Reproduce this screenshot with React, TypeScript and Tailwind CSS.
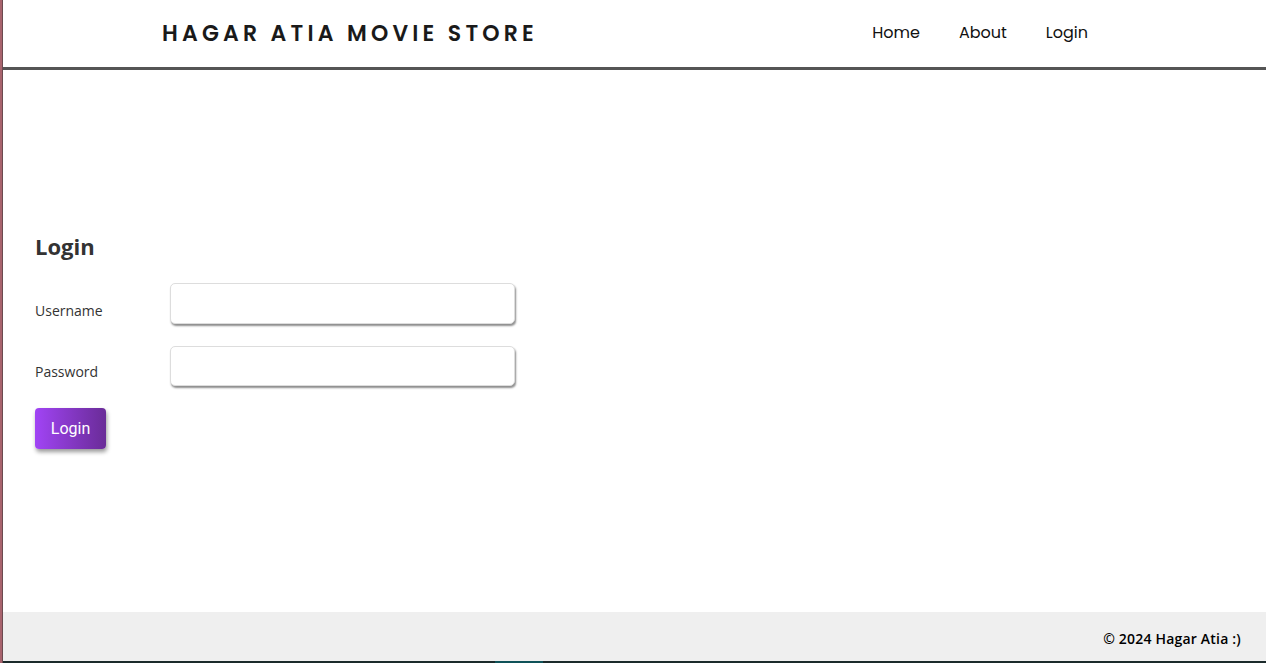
export default function App() {
  return (
    <div className="flex h-[663px] w-full bg-white font-['Open_Sans',sans-serif]">
      <div className="flex w-[3px] shrink-0">
        <div className="w-[2px] bg-[#a8636d]" />
        <div className="w-[1px] bg-[#6b4a50]" />
      </div>
      <div className="flex min-w-0 flex-1 flex-col">
        <header className="flex h-[70px] shrink-0 items-center border-b-[3px] border-[#555555] pb-[1px] pl-[159px] pr-[178px]">
          <h1 className="font-['Poppins','Inter',sans-serif] text-[22px] font-semibold tracking-[0.19em] text-[#1a1a1a]">
            HAGAR ATIA MOVIE STORE
          </h1>
          <nav className="ml-auto flex gap-[39px] font-['Poppins','Inter',sans-serif] text-[16px] text-[#111]">
            <a href="#">Home</a>
            <a href="#">About</a>
            <a href="#">Login</a>
          </nav>
        </header>
        <main className="flex flex-1 flex-col justify-center pb-[3px] pl-[32px]">
          <h2 className="mb-[20px] text-[22px] font-bold text-[#333]">Login</h2>
          <form className="flex flex-col" onSubmit={(e) => e.preventDefault()}>
            <div className="mb-[22px] flex items-center">
              <label htmlFor="username" className="w-[135px] pt-[13px] text-[14px] font-medium text-[#333]">
                Username
              </label>
              <input
                id="username"
                className="h-[41px] w-[345px] rounded-[5px] border border-[#dddddd] bg-white shadow-[1px_2px_2px_rgba(0,0,0,0.45)] outline-none"
              />
            </div>
            <div className="mb-[22px] flex items-center">
              <label htmlFor="password" className="w-[135px] pt-[10px] text-[14px] font-medium text-[#333]">
                Password
              </label>
              <input
                id="password"
                type="password"
                className="h-[40px] w-[345px] rounded-[5px] border border-[#dddddd] bg-white shadow-[1px_2px_2px_rgba(0,0,0,0.45)] outline-none"
              />
            </div>
            <button
              type="submit"
              className="h-[41px] w-[71px] rounded-[4px] bg-gradient-to-r from-[#a144f5] to-[#6a2c98] font-['Roboto',sans-serif] text-[16px] text-white shadow-[1px_3px_4px_rgba(0,0,0,0.4)]"
            >
              Login
            </button>
          </form>
        </main>
        <footer className="flex h-[49px] shrink-0 items-center justify-end bg-[#efefef] pr-[25px] pt-[4px] text-[14px] font-semibold tracking-[0.2px] text-black">
          © 2024 Hagar Atia :)
        </footer>
        <div className="flex h-[2px] shrink-0 bg-[#1b2a2b]">
          <div className="ml-[492px] w-[48px] bg-[#0f5258]" />
        </div>
      </div>
    </div>
  );
}
